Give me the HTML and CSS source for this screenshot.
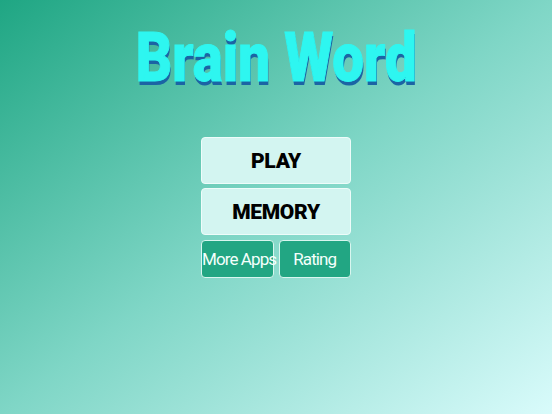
FILE: index.html
```html
<!DOCTYPE html>
<html>
<head>
<meta charset="utf-8">
<link rel="stylesheet" href="styles.css">
</head>
<body>
<main class="screen">
  <h1 class="title"><span class="title-text">Brain Word</span></h1>
  <div class="menu">
    <button class="btn btn-main">PLAY</button>
    <button class="btn btn-main">MEMORY</button>
    <div class="row">
      <button class="btn btn-small">More Apps</button>
      <button class="btn btn-small">Rating</button>
    </div>
  </div>
</main>
</body>
</html>
```
FILE: styles.css
```css
html, body {
  margin: 0;
  padding: 0;
  width: 552px;
  height: 414px;
  overflow: hidden;
}
body {
  background: linear-gradient(to bottom right, #1fa683 0%, #7fd6c6 50%, #d9fbfb 100%);
}
.screen {
  display: flex;
  flex-direction: column;
  align-items: center;
  padding-top: 25px;
}
.title {
  margin: 0;
  height: 67px;
  font-family: "Roboto", "Liberation Sans", Arial, sans-serif;
  font-weight: 900;
  font-size: 68px;
  line-height: 67px;
  color: #2ef6f0;
  -webkit-text-stroke: 1px #2ef6f0;
  text-shadow: 1px 4px 0 #1b64a4;
}
.title-text {
  display: inline-block;
  transform: scaleX(0.83);
  transform-origin: center;
  white-space: nowrap;
}
.menu {
  margin-top: 45px;
  width: 150px;
  display: flex;
  flex-direction: column;
  gap: 4px;
}
.btn {
  margin: 0;
  padding: 0;
  border-radius: 4px;
  cursor: pointer;
}
.btn-main {
  height: 47px;
  background: #d3f5f1;
  border: 1px solid #eefcfa;
  color: #000;
  font-family: "Roboto", "Liberation Sans", sans-serif;
  font-weight: 900;
  font-size: 21px;
  letter-spacing: -0.3px;
}
.row {
  margin-top: 1px;
  display: flex;
  gap: 5px;
}
.btn-small {
  flex: 1 1 0;
  min-width: 0;
  height: 38px;
  background: #22a683;
  border: 1px solid #d8f6ef;
  color: #f4fffb;
  font-family: "Roboto", "Liberation Sans", sans-serif;
  font-weight: 400;
  font-size: 17px;
  letter-spacing: -0.9px;
  white-space: nowrap;
}
```
